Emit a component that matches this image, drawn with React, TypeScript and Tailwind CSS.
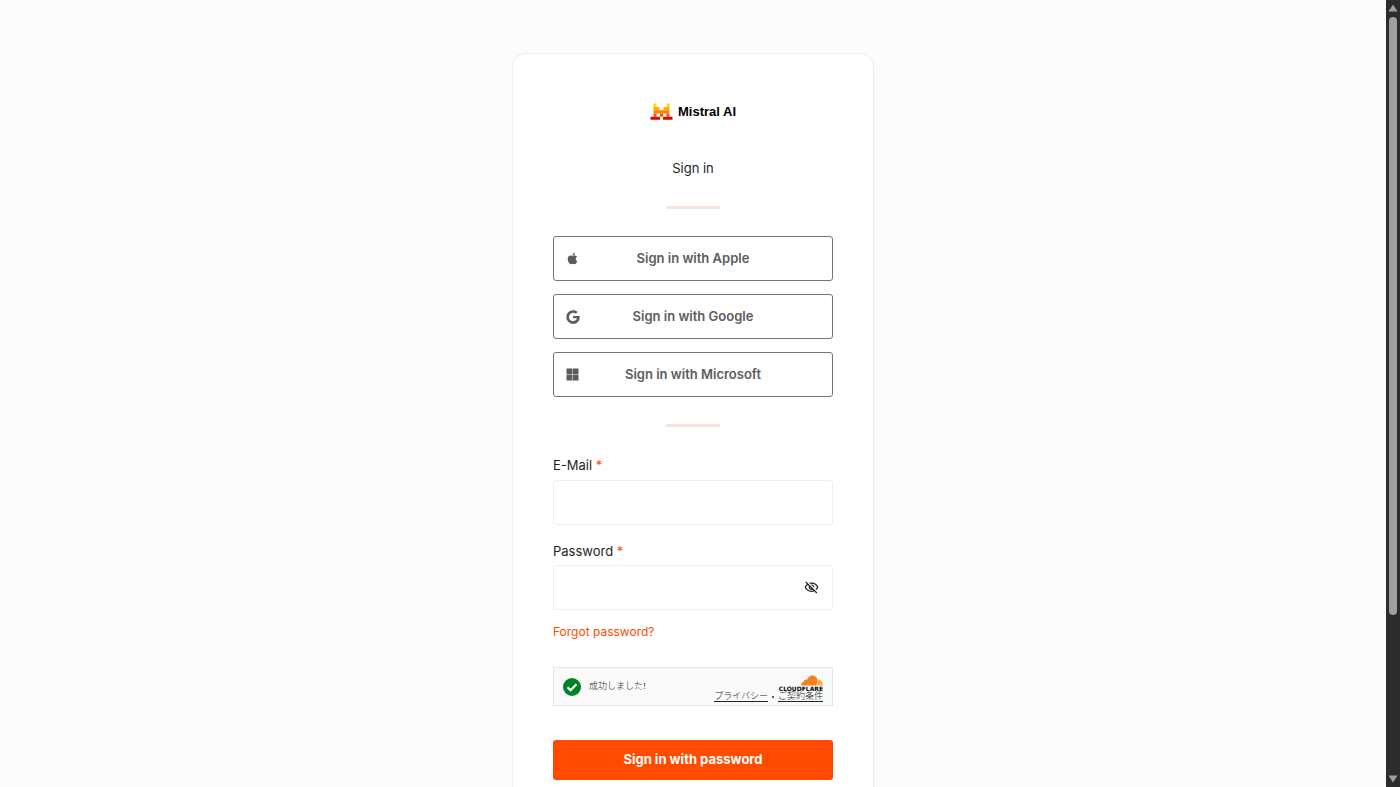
import { useState } from "react";
import type { ReactNode } from "react";
import { FaApple, FaGoogle } from "react-icons/fa";
import { MdOutlineVisibility, MdOutlineVisibilityOff } from "react-icons/md";

const MistralLogo = () => (
  <svg width="23" height="17" viewBox="0 0 23 17">
    <path fill="#ffd800" d="M3.500.5h3v3.500h-3zM16.500.5h3v3.500h-3z" />
    <path fill="#ffaf00" d="M3.500 4h6v3.200h-6zM13.500 4h6v3.200h-6z" />
    <path fill="#ff8205" d="M3.500 7.200h16v3.300h-16z" />
    <path fill="#fa500f" d="M3.500 10.500h3v3.200h-3zM10 10.500h3v3.200h-3zM16.500 10.500h3v3.200h-3z" />
    <path fill="#e10500" d="M.5 13.700h9.500v3H.5zM13 13.700h9.500v3H13z" />
  </svg>
);

const WindowsIcon = () => (
  <svg width="13" height="13" viewBox="0 0 13 13" fill="currentColor">
    <path d="M.5.500h5.700v5.700H.5zM6.700.5h5.800v5.700H6.700zM.5 6.700h5.700v5.800H.5zM6.700 6.700h5.800v5.800H6.700z" />
  </svg>
);

const CloudIcon = () => (
  <svg width="22" height="11" viewBox="0 0 22 11">
    <path
      fill="#f6821f"
      d="M15.6 10.5H.3C-.2 8.500 1 6.800 3 6.700c-.3-1.700 1.500-2.900 3-2C7 1.900 9.200.3 11.600.4c2.600.1 4.400 1.900 4.800 4.200z"
    />
    <path
      fill="#fbad41"
      d="M17 4.600c2.700-.1 5 2.300 4.700 5.500 0 .2-.1.400-.4.400h-5.100l.4-1.700c.1-.5-.1-.9-.7-1z"
    />
  </svg>
);

const providers: { name: string; icon: ReactNode }[] = [
  { name: "Apple", icon: <FaApple size={13} /> },
  { name: "Google", icon: <FaGoogle size={14} /> },
  { name: "Microsoft", icon: <WindowsIcon /> },
];

const Divider = () => (
  <hr className="mx-auto h-[3px] w-[54px] rounded-sm border-0 bg-[#f6e3dc]" />
);

const Turnstile = () => (
  <div className="mt-[25px] flex h-[39px] items-center justify-between border border-[#e5e5e5] bg-[#fafafa] px-[9px] font-['Liberation_Serif','Noto_Sans_CJK_JP',serif] text-[9px] font-light text-[#232323]">
    <div className="flex items-center gap-2">
      <svg width="18" height="18" viewBox="0 0 18 18">
        <circle cx="9" cy="9" r="9" fill="#038127" />
        <path d="M4.500 9.300l3 3 6-6.100" fill="none" stroke="#fff" strokeWidth="2.200" />
      </svg>
      <span>成功しました!</span>
    </div>
    <div className="flex flex-col items-end pt-1">
      <CloudIcon />
      <span className="font-['DejaVu_Sans',sans-serif] text-[6px] leading-[5px] font-bold text-black">
        CLOUDFLARE
      </span>
      <div className="mt-px flex items-center gap-1 leading-[9px]">
        <a href="#privacy" className="border-b border-[#232323]">
          プライバシー
        </a>
        <span className="size-[2px] rounded-full bg-[#232323]" />
        <a href="#terms" className="border-b border-[#232323]">
          ご契約条件
        </a>
      </div>
    </div>
  </div>
);

const SignInCard = () => {
  const [visible, setVisible] = useState(false);

  return (
    <section className="mx-auto mt-[53px] w-full max-w-[362px] rounded-t-[14px] border border-b-0 border-[#faeae6] bg-white px-10 pb-12">
      <div className="mt-[49px] flex items-center justify-center gap-[5px]">
        <MistralLogo />
        <span className="font-['Liberation_Sans',sans-serif] text-[13px] leading-[17px] font-bold text-black">
          Mistral AI
        </span>
      </div>
      <h1 className="mt-[38px] mb-7 text-center text-[13px] leading-5">Sign in</h1>
      <Divider />

      <div className="my-[27px] flex flex-col gap-[13px]">
        {providers.map((provider) => (
          <button
            key={provider.name}
            type="button"
            className="grid h-[45px] grid-cols-[14px_1fr_14px] items-center rounded-[3px] border border-[#757575] px-3 text-[13px] font-semibold text-[#5c5c5c]"
          >
            {provider.icon}
            <span>Sign in with {provider.name}</span>
          </button>
        ))}
      </div>
      <Divider />

      <form onSubmit={(e) => e.preventDefault()}>
        <label htmlFor="email" className="mt-7 block text-[13px] leading-5">
          E-Mail <span className="text-[#ff4a00]">*</span>
        </label>
        <input
          id="email"
          type="email"
          className="mt-[5px] h-[45px] w-full rounded-[3px] border border-[#faeae6] px-3 text-[13px]"
        />

        <label htmlFor="password" className="mt-4 block text-[13px] leading-5">
          Password <span className="text-[#ff4a00]">*</span>
        </label>
        <div className="mt-1 flex h-[45px] items-center rounded-[3px] border border-[#faeae6] pr-[13px]">
          <input
            id="password"
            type={visible ? "text" : "password"}
            className="h-full min-w-0 flex-1 px-3 text-[13px] outline-none"
          />
          <button
            type="button"
            aria-label="Toggle password visibility"
            onClick={() => setVisible(!visible)}
          >
            {visible ? <MdOutlineVisibility size={15} /> : <MdOutlineVisibilityOff size={15} />}
          </button>
        </div>
        <a href="#recovery" className="mt-3 block text-xs leading-5 text-[#ff4a00]">
          Forgot password?
        </a>

        <Turnstile />

        <button
          type="submit"
          className="mt-[34px] h-10 w-full rounded-[3px] bg-[#ff4a00] text-[13px] font-bold text-white"
        >
          Sign in with password
        </button>
      </form>
    </section>
  );
};

const Scrollbar = () => (
  <div className="flex w-[14px] shrink-0 flex-col items-center bg-[#2c2c2c] py-1">
    <svg width="10" height="8" viewBox="0 0 10 8" fill="#9f9f9f">
      <path d="M5 .5L9.500 7.500H.5z" />
    </svg>
    <div className="my-[5px] flex w-2 flex-1 flex-col">
      <div className="h-27/34 rounded-full bg-[#9f9f9f]" />
    </div>
    <svg width="10" height="8" viewBox="0 0 10 8" fill="#9f9f9f">
      <path d="M5 7.500L.5.500h9z" />
    </svg>
  </div>
);

const App = () => {
  return (
    <div className="flex h-screen overflow-hidden bg-[#fcfcfc] font-['Inter',sans-serif] text-[#1e1e24]">
      <main className="min-w-0 flex-1 overflow-hidden">
        <SignInCard />
      </main>
      <Scrollbar />
    </div>
  );
};

export default App;
